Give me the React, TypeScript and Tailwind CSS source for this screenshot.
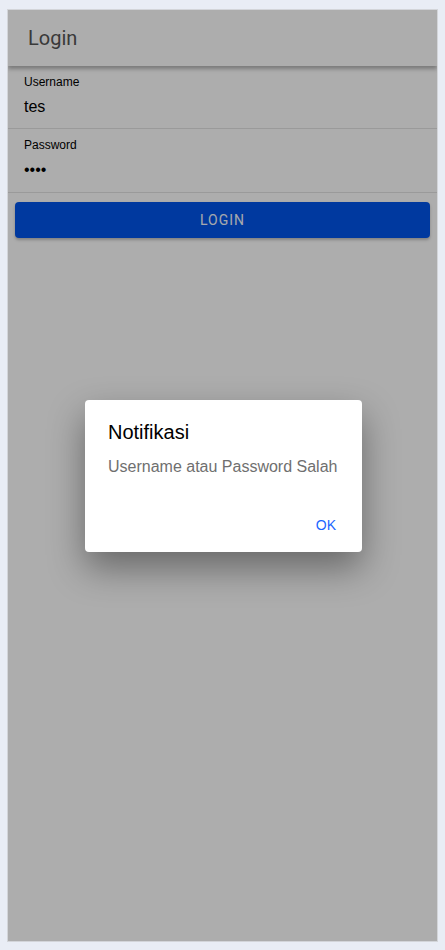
import React from 'react';

const sans = "font-['Liberation_Sans',Arial,sans-serif]";

const Field: React.FC<{ label: string; value: string; h: string }> = ({ label, value, h }) => (
  <div className={`border-b border-[#e3e3e3] pl-[16px] pt-[9px] ${h}`}>
    <div className="text-[12px] leading-[15px] text-black">{label}</div>
    <div className="text-[16px] leading-[20px] text-black mt-[7px]">{value}</div>
  </div>
);

export default function App() {
  return (
    <div className={`min-h-screen bg-[#e9edf5] pl-[7px] pr-[7px] pt-[9px] pb-[8px] ${sans}`}>
      <div className="relative h-[933px] border border-[#d3d5d9] bg-white overflow-hidden">
        <div className="h-[56px] flex items-center pl-[20px] bg-white shadow-[0_3px_4px_rgba(0,0,0,0.3)] relative z-10">
          <h1 className="text-[20px] text-[#555] font-['Roboto',sans-serif]">Login</h1>
        </div>
        <Field label="Username" value="tes" h="h-[63px]" />
        <Field label="Password" value="••••" h="h-[64px]" />
        <div className="px-[7px] pt-[9px]">
          <button className="w-full h-[36px] rounded-[4px] bg-[#0055ea] text-[#f4f8ff] text-[14px] tracking-[0.07em] shadow-[0_2px_3px_rgba(0,0,0,0.25)] font-['Roboto',sans-serif]">
            LOGIN
          </button>
        </div>

        <div className="absolute inset-0 z-20 bg-black/[0.32]" />

        <div className="absolute inset-0 z-30 flex items-center justify-center pl-[2px] pt-[1px]">
          <div className="w-[277px] h-[152px] bg-white rounded-[4px] shadow-[0_16px_36px_rgba(0,0,0,0.4)] flex flex-col">
            <div className="pl-[23px] pt-[20px] pr-[16px]">
              <div className="text-[20px] leading-[25px] text-black">Notifikasi</div>
              <div className="text-[16px] leading-[20px] text-[#6f6f6f] mt-[12px]">Username atau Password Salah</div>
            </div>
            <div className="mt-auto flex justify-end pr-[26px] pb-[16px]">
              <button className="text-[14px] text-[#1a66ff]">OK</button>
            </div>
          </div>
        </div>
      </div>
    </div>
  );
}
